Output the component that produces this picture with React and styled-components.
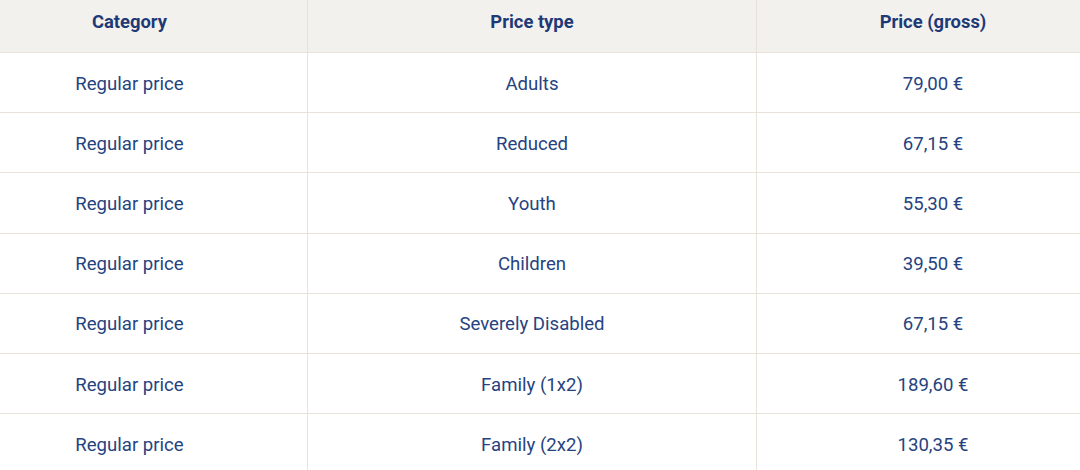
import React from "react";
import styled, { createGlobalStyle } from "styled-components";

const Global = createGlobalStyle`
  html, body { margin: 0; padding: 0; background: #ffffff; }
  body { font-family: Roboto, "Liberation Sans", Arial, sans-serif; }
`;

const Table = styled.div`
  width: 1080px;
  height: 470px;
  overflow: hidden;
  display: grid;
  grid-template-columns: 308px 449px 1fr;
  grid-auto-rows: auto;
`;

const pad = {
  left: "3px 48px 0 0",
  mid: "3px 0 0 0",
  right: "3px 0 0 29px",
};

const Cell = styled.div`
  display: flex;
  align-items: center;
  justify-content: center;
  box-sizing: border-box;
  text-align: center;
  font-size: 18.6px;
  line-height: 27px;
  border-bottom: 1px solid #e9e2d9;
  border-right: ${(p) => (p.$col === "right" ? "none" : "1px solid #e9e2d9")};
  margin: 0;
  color: #26437f;
  padding: ${(p) => pad[p.$col]};
  height: 60.2px;
`;

const HeadCell = styled(Cell)`
  background: #f3f1ee;
  font-weight: 700;
  font-size: 18.4px;
  color: #1d3a76;
  height: 53px;
  align-items: flex-start;
  padding-top: 8px;
`;

const rows = [
  ["Regular price", "Adults", "79,00 €"],
  ["Regular price", "Reduced", "67,15 €"],
  ["Regular price", "Youth", "55,30 €"],
  ["Regular price", "Children", "39,50 €"],
  ["Regular price", "Severely Disabled", "67,15 €"],
  ["Regular price", "Family (1x2)", "189,60 €"],
  ["Regular price", "Family (2x2)", "130,35 €"],
];

const cols = ["left", "mid", "right"];

export default function App() {
  return (
    <>
      <Global />
      <Table>
        {["Category", "Price type", "Price (gross)"].map((h, i) => (
          <HeadCell key={h} $col={cols[i]}>
            {h}
          </HeadCell>
        ))}
        {rows.map((r, ri) =>
          r.map((c, ci) => (
            <Cell key={ri + "-" + ci} $col={cols[ci]}>
              {c}
            </Cell>
          ))
        )}
      </Table>
    </>
  );
}
